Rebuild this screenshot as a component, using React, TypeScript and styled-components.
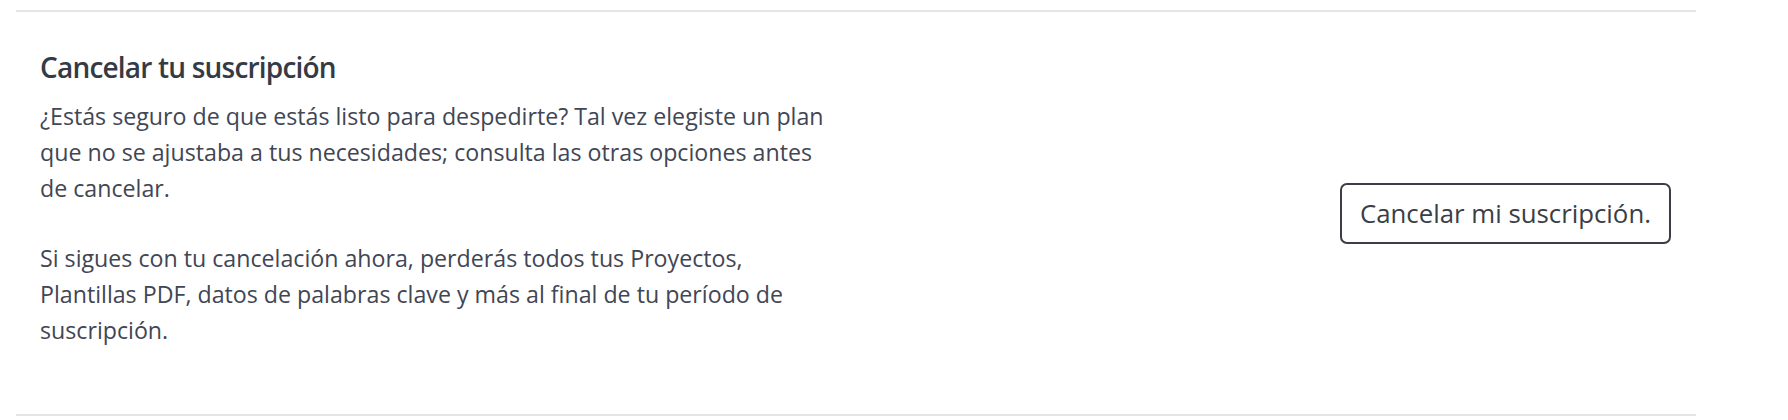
import styled, { createGlobalStyle } from "styled-components";

const GlobalStyle = createGlobalStyle`
  html, body {
    margin: 0;
    padding: 0;
    background: #ffffff;
  }
  body {
    padding-top: 10px;
    font-family: "Open Sans", "Liberation Sans", sans-serif;
  }
`;

const Section = styled.section`
  margin-left: 16px;
  width: 1680px;
  box-sizing: border-box;
  border-top: 2px solid #e3e5e9;
  border-bottom: 2px solid #e3e5e9;
  display: flex;
  justify-content: space-between;
  align-items: center;
  padding: 0 25px 0 24px;
`;

const TextColumn = styled.div`
  max-width: 795px;
  padding: 38px 0 66px;
`;

const Title = styled.h2`
  margin: 0 0 14px;
  font-size: 28px;
  line-height: 34px;
  font-weight: 600;
  letter-spacing: -0.8px;
  color: #353a45;
`;

const Paragraph = styled.p<{ $last?: boolean }>`
  margin: 0 0 ${(p) => (p.$last ? "0" : "34px")};
  font-size: 23.2px;
  line-height: 36px;
  color: #414654;
`;

const OutlineButton = styled.button`
  box-sizing: border-box;
  height: 61px;
  padding: 0 18px;
  border: 2px solid #3b3e46;
  border-radius: 7px;
  background: #ffffff;
  font-family: "Open Sans", "Liberation Sans", sans-serif;
  font-size: 25.8px;
  line-height: 57px;
  color: #3a3e47;
  cursor: pointer;
  white-space: nowrap;
`;

const App = () => {
  return (
    <>
      <GlobalStyle />
      <Section>
        <TextColumn>
          <Title>Cancelar tu suscripción</Title>
          <Paragraph>
            ¿Estás seguro de que estás listo para despedirte? Tal vez elegiste
            un plan que no se ajustaba a tus necesidades; consulta las otras
            opciones antes de cancelar.
          </Paragraph>
          <Paragraph $last>
            Si sigues con tu cancelación ahora, perderás todos tus Proyectos,
            Plantillas PDF, datos de palabras clave y más al final de tu período
            de suscripción.
          </Paragraph>
        </TextColumn>
        <OutlineButton>Cancelar mi suscripción.</OutlineButton>
      </Section>
    </>
  );
};

export default App;
